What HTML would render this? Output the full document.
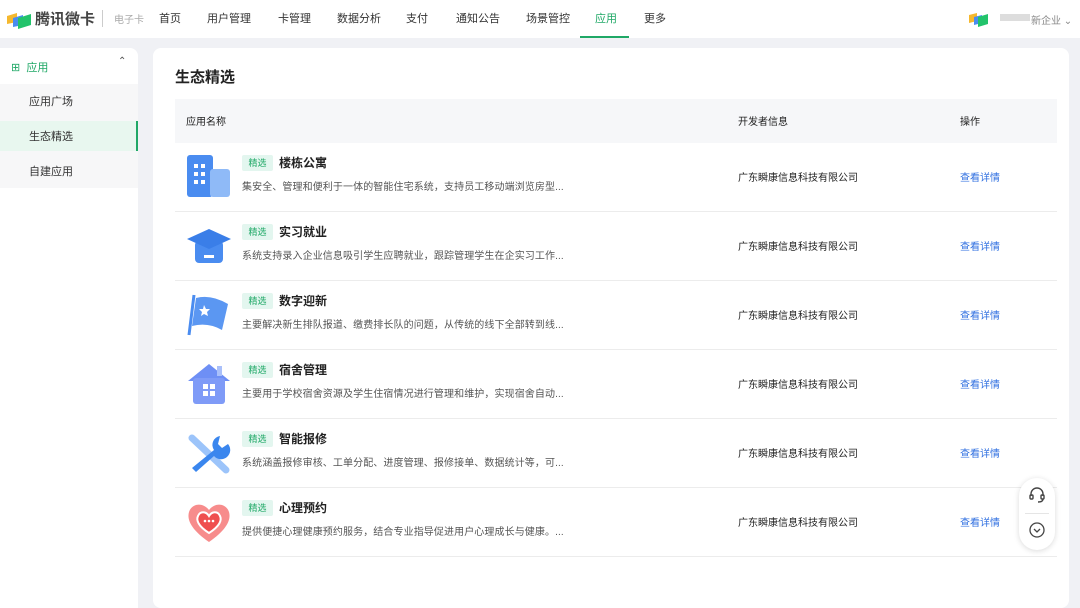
<!DOCTYPE html>
<html><head><meta charset="utf-8"><style>
*{margin:0;padding:0;box-sizing:border-box}
body{width:1080px;height:573px;overflow:hidden;background:#f0f1f5;font-family:"Liberation Sans","Noto Sans CJK SC",sans-serif;color:#222;position:relative}
.hd{position:absolute;left:0;top:0;width:1080px;height:38px;background:#fff}
.nav{position:absolute;top:10px;font-size:11px;color:#333}
.act{color:#1fa866}
.side{position:absolute;left:0;top:48px;width:138px;height:560px;background:#fff;border-radius:0 8px 0 0}
.sgrp{position:absolute;left:0;top:84px;width:138px;height:104px;background:#f7f7f8}
.si{position:absolute;left:29px;font-size:11px;color:#333}
.main{position:absolute;left:153px;top:48px;width:916px;height:560px;background:#fff;border-radius:8px}
.th{position:absolute;left:175px;top:99px;width:882px;height:44px;background:#f6f7f9}
.t{position:absolute;font-size:11px}
.row{position:absolute;left:175px;width:882px;height:69px;border-bottom:1px solid #ececec}
.ic{position:absolute;left:11px;top:11px;width:46px;height:46px}
.tag{position:absolute;left:67px;top:12px;width:31px;height:16px;background:#e3f6ef;color:#1fa866;font-size:9px;line-height:16px;text-align:center;border-radius:2px}
.nm{position:absolute;left:104px;top:11px;font-size:12px;font-weight:bold;color:#222}
.ds{position:absolute;left:67px;top:35px;font-size:10px;letter-spacing:0.1px;color:#555;white-space:nowrap}
.dv{position:absolute;left:563px;top:26px;font-size:10px;color:#222}
.op{position:absolute;left:785px;top:26px;font-size:10px;color:#2f6fe0}
</style></head><body>
<div class="hd">
<svg style="position:absolute;left:5px;top:10px" width="28" height="20"><path d="M2 6 L12 3 L12 12 L2 14Z" fill="#f5b82e"/><path d="M8 8 L18 5 L18 15 L8 17Z" fill="#4a8cf0"/><path d="M13 8 L26 4 L26 15 L13 19Z" fill="#22c36b"/></svg>
<div style="position:absolute;left:35px;top:8px;font-size:15px;font-weight:bold;color:#444">腾讯微卡</div>
<div style="position:absolute;left:102px;top:10px;width:1px;height:17px;background:#ccc"></div>
<div class="nav" style="left:114px;color:#aaa;font-size:10px;top:11px">电子卡</div>
<div class="nav" style="left:159px">首页</div>
<div class="nav" style="left:207px">用户管理</div>
<div class="nav" style="left:278px">卡管理</div>
<div class="nav" style="left:337px">数据分析</div>
<div class="nav" style="left:406px">支付</div>
<div class="nav" style="left:456px">通知公告</div>
<div class="nav" style="left:526px">场景管控</div>
<div class="nav act" style="left:595px">应用</div>
<div style="position:absolute;left:580px;top:36px;width:49px;height:2px;background:#1fa866"></div>
<div class="nav" style="left:644px">更多</div>
<svg style="position:absolute;left:968px;top:11px" width="24" height="17"><path d="M1 4 L9 2 L9 10 L1 12Z" fill="#f5b82e"/><path d="M6 6 L14 4 L14 12 L6 14Z" fill="#4a8cf0"/><path d="M10 6 L20 3 L20 13 L10 16Z" fill="#22c36b"/></svg>
<div style="position:absolute;left:1000px;top:14px;width:30px;height:7px;background:#ddd"></div>
<div class="nav" style="left:1031px;color:#888;font-size:10px;top:12px">新企业 ⌄</div>
</div>
<div class="side">
<div style="position:absolute;left:11px;top:11px;font-size:11px;color:#1fa866">⊞ &nbsp;应用</div>
<div style="position:absolute;left:118px;top:8px;font-size:10px;color:#555">⌃</div>
</div>
<div class="sgrp"></div>
<div class="si" style="top:93px">应用广场</div>
<div style="position:absolute;left:0;top:121px;width:138px;height:30px;background:#e8f7ef;border-right:2px solid #1fa866"></div>
<div class="si act" style="top:128px">生态精选</div>
<div class="si" style="top:163px">自建应用</div>
<div class="main"></div>
<div style="position:absolute;left:175px;top:66px;font-size:15px;font-weight:bold">生态精选</div>
<div class="th"></div>
<div class="t" style="left:186px;top:113px;font-size:10px">应用名称</div>
<div class="t" style="left:738px;top:113px;font-size:10px">开发者信息</div>
<div class="t" style="left:960px;top:113px;font-size:10px">操作</div>

<div class="row" style="top:143px"><svg class="ic" viewBox="0 0 46 46"><rect x="1" y="1" width="26" height="42" rx="3" fill="#4a8cf0"/><rect x="24" y="15" width="20" height="28" rx="3" fill="#8fbaf7"/><g fill="#fff"><rect x="8" y="10" width="4" height="4"/><rect x="15" y="10" width="4" height="4"/><rect x="8" y="18" width="4" height="4"/><rect x="15" y="18" width="4" height="4"/><rect x="8" y="26" width="4" height="4"/><rect x="15" y="26" width="4" height="4"/></g></svg><div class="tag">精选</div><div class="nm">楼栋公寓</div><div class="ds">集安全、管理和便利于一体的智能住宅系统，支持员工移动端浏览房型...</div><div class="dv">广东瞬康信息科技有限公司</div><div class="op">查看详情</div></div>
<div class="row" style="top:212px"><svg class="ic" viewBox="0 0 46 46"><rect x="9" y="18" width="28" height="22" rx="4" fill="#4a8cf0"/><path d="M1 16 L23 6 L45 16 L23 26Z" fill="#3a7ee8"/><rect x="18" y="32" width="10" height="3" fill="#fff"/></svg><div class="tag">精选</div><div class="nm">实习就业</div><div class="ds">系统支持录入企业信息吸引学生应聘就业，跟踪管理学生在企实习工作...</div><div class="dv">广东瞬康信息科技有限公司</div><div class="op">查看详情</div></div>
<div class="row" style="top:281px"><svg class="ic" viewBox="0 0 46 46"><path d="M8 3 L3 43" stroke="#4a8cf0" stroke-width="3"/><path d="M10 6 Q25 2 42 12 L36 38 Q22 30 6 34Z" fill="#5b97f2"/><path d="M18 13 l2 4 4 0 -3 3 1 4 -4 -2 -3 2 1 -4 -3 -3 4 0z" fill="#fff"/></svg><div class="tag">精选</div><div class="nm">数字迎新</div><div class="ds">主要解决新生排队报道、缴费排长队的问题，从传统的线下全部转到线...</div><div class="dv">广东瞬康信息科技有限公司</div><div class="op">查看详情</div></div>
<div class="row" style="top:350px"><svg class="ic" viewBox="0 0 46 46"><path d="M2 20 L23 3 L44 20Z" fill="#6e8ff5"/><rect x="7" y="17" width="32" height="26" rx="3" fill="#7f9bf7"/><rect x="31" y="5" width="5" height="10" fill="#aac0fa"/><g fill="#fff"><rect x="17" y="23" width="5" height="5"/><rect x="24" y="23" width="5" height="5"/><rect x="17" y="30" width="5" height="5"/><rect x="24" y="30" width="5" height="5"/></g></svg><div class="tag">精选</div><div class="nm">宿舍管理</div><div class="ds">主要用于学校宿舍资源及学生住宿情况进行管理和维护，实现宿舍自动...</div><div class="dv">广东瞬康信息科技有限公司</div><div class="op">查看详情</div></div>
<div class="row" style="top:419px"><svg class="ic" viewBox="0 0 46 46"><path d="M6 8 L40 40" stroke="#9cc4fa" stroke-width="7" stroke-linecap="round"/><path d="M34 6 A9 9 0 0 0 28 20 L6 38 L10 42 L28 26 A9 9 0 0 0 42 14 L36 18 L32 14Z" fill="#3a86ee"/></svg><div class="tag">精选</div><div class="nm">智能报修</div><div class="ds">系统涵盖报修审核、工单分配、进度管理、报修接单、数据统计等，可...</div><div class="dv">广东瞬康信息科技有限公司</div><div class="op">查看详情</div></div>
<div class="row" style="top:488px"><svg class="ic" viewBox="0 0 46 46"><path d="M23 43 C4 30 1 20 3 13 C6 4 17 3 23 11 C29 3 40 4 43 13 C45 20 42 30 23 43Z" fill="#f78c8c"/><path d="M23 34 C12 27 10 21 12 17 C14 12 20 12 23 17 C26 12 32 12 34 17 C36 21 34 27 23 34Z" fill="#ef4f4f" stroke="#fff" stroke-width="2"/><g fill="#fff"><circle cx="19" cy="22" r="1.3"/><circle cx="23" cy="22" r="1.3"/><circle cx="27" cy="22" r="1.3"/></g></svg><div class="tag">精选</div><div class="nm">心理预约</div><div class="ds">提供便捷心理健康预约服务，结合专业指导促进用户心理成长与健康。...</div><div class="dv">广东瞬康信息科技有限公司</div><div class="op">查看详情</div></div>

<div style="position:absolute;left:1019px;top:478px;width:36px;height:72px;background:#fff;border-radius:18px;box-shadow:0 1px 6px rgba(0,0,0,.15)">
<svg style="position:absolute;left:9px;top:8px" width="18" height="18" viewBox="0 0 18 18" fill="none" stroke="#444" stroke-width="1.4"><path d="M3 10 V8 a6 6 0 0 1 12 0 V10"/><rect x="2" y="9" width="3" height="4" rx="1"/><rect x="13" y="9" width="3" height="4" rx="1"/><path d="M15 13 q0 3 -5 3"/></svg>
<div style="position:absolute;left:6px;top:35px;width:24px;height:1px;background:#e5e5e5"></div>
<svg style="position:absolute;left:9px;top:43px" width="18" height="18" viewBox="0 0 18 18" fill="none" stroke="#444" stroke-width="1.3"><circle cx="9" cy="9" r="7"/><path d="M6 8 L9 11 L12 8"/></svg>
</div>
</body></html>
